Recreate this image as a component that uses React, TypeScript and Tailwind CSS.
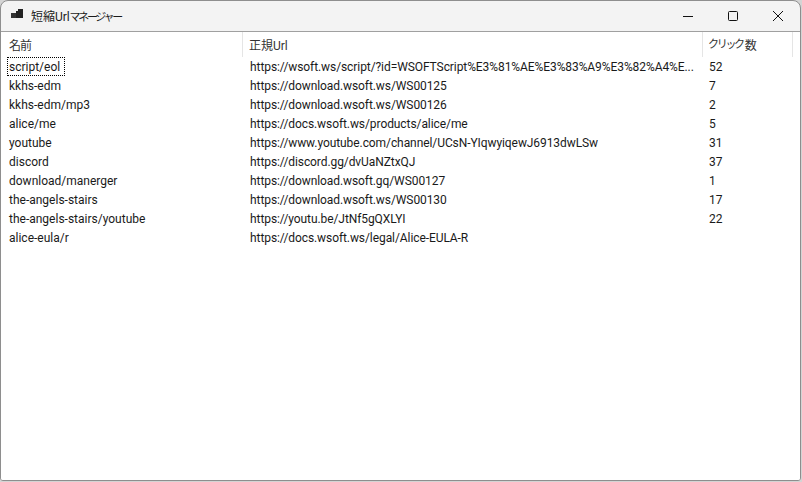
const rows = [
  ["script/eol", "https://wsoft.ws/script/?id=WSOFTScript%E3%81%AE%E3%83%A9%E3%82%A4%E...", "52"],
  ["kkhs-edm", "https://download.wsoft.ws/WS00125", "7"],
  ["kkhs-edm/mp3", "https://download.wsoft.ws/WS00126", "2"],
  ["alice/me", "https://docs.wsoft.ws/products/alice/me", "5"],
  ["youtube", "https://www.youtube.com/channel/UCsN-YIqwyiqewJ6913dwLSw", "31"],
  ["discord", "https://discord.gg/dvUaNZtxQJ", "37"],
  ["download/manerger", "https://download.wsoft.gq/WS00127", "1"],
  ["the-angels-stairs", "https://download.wsoft.ws/WS00130", "17"],
  ["the-angels-stairs/youtube", "https://youtu.be/JtNf5gQXLYI", "22"],
  ["alice-eula/r", "https://docs.wsoft.ws/legal/Alice-EULA-R", ""],
];

const font = "font-['Roboto','Noto_Sans_CJK_JP',sans-serif]";

export default function App() {
  return (
    <div className={`w-[802px] h-[482px] overflow-hidden bg-[#d4d4d4] ${font} text-[12px] text-[#1a1a1a]`}>
      <div className="w-[801px] h-[481px] flex flex-col rounded-t-[8px] rounded-b-[3px] border border-[#8e8e8e] bg-[#f3f3f3] overflow-hidden">
        <div className="h-[30px] shrink-0 flex items-center">
          <svg width="16" height="16" viewBox="0 0 16 16" className="ml-[9px] shrink-0">
            <rect x="1" y="5" width="5" height="5" fill="#333" />
            <path d="M6 3h2V1h5v9H6z" fill="#222" />
          </svg>
          <span className="ml-[5px] pt-[2px] leading-[16px] whitespace-nowrap">
            短縮<span className="tracking-[-0.1px]">Url</span>
            <span className="text-[11px] tracking-[-2.3px]">マネージャー</span>
          </span>
          <div className="ml-auto flex items-center h-full">
            <div className="w-[45px] h-full flex items-center justify-center">
              <svg width="12" height="12" viewBox="0 0 12 12"><path d="M1 6.5h10" stroke="#111" strokeWidth="1" /></svg>
            </div>
            <div className="w-[45px] h-full flex items-center justify-center">
              <svg width="12" height="12" viewBox="0 0 12 12"><rect x="1.5" y="1.5" width="9" height="9" rx="1" fill="none" stroke="#111" strokeWidth="1" /></svg>
            </div>
            <div className="w-[45px] h-full flex items-center justify-center">
              <svg width="12" height="12" viewBox="0 0 12 12"><path d="M1 1l10 10M11 1L1 11" stroke="#111" strokeWidth="1" /></svg>
            </div>
          </div>
        </div>
        <div className="flex-1 min-h-0 bg-white border-t border-[#a0a0a0]">
          <div className="h-[25px] flex items-center text-[#333]">
            <div className="w-[242px] h-full pl-[8px] pt-[2px] flex items-center border-r border-[#e5e5e5] tracking-[-1px]">名前</div>
            <div className="w-[460px] h-full pl-[6px] pt-[2px] flex items-center border-r border-[#e5e5e5]">正規Url</div>
            <div className="w-[90px] h-full pl-[5px] pt-[2px] flex items-center border-r border-[#e5e5e5] whitespace-nowrap">
              <span className="text-[11px] tracking-[-2.3px]">クリック</span>
              <span className="ml-[2px]">数</span>
            </div>
          </div>
          <div className="flex flex-col">
            {rows.map((r, i) => (
              <div key={r[0]} className="h-[19px] flex items-start">
                <div className="w-[242px] h-[19px] pl-[8px] pt-px relative leading-[19px] whitespace-nowrap">
                  {i === 0 && <span className="absolute left-[6px] top-0 h-[19px] w-[58px] border border-dotted border-black" />}
                  {r[0]}
                </div>
                <div className="w-[460px] h-[19px] pl-[7px] pt-px leading-[19px] whitespace-nowrap tracking-[-0.08px]">{r[1]}</div>
                <div className="w-[90px] h-[19px] pl-[6px] pt-px leading-[19px]">{r[2]}</div>
              </div>
            ))}
          </div>
        </div>
      </div>
    </div>
  );
}
